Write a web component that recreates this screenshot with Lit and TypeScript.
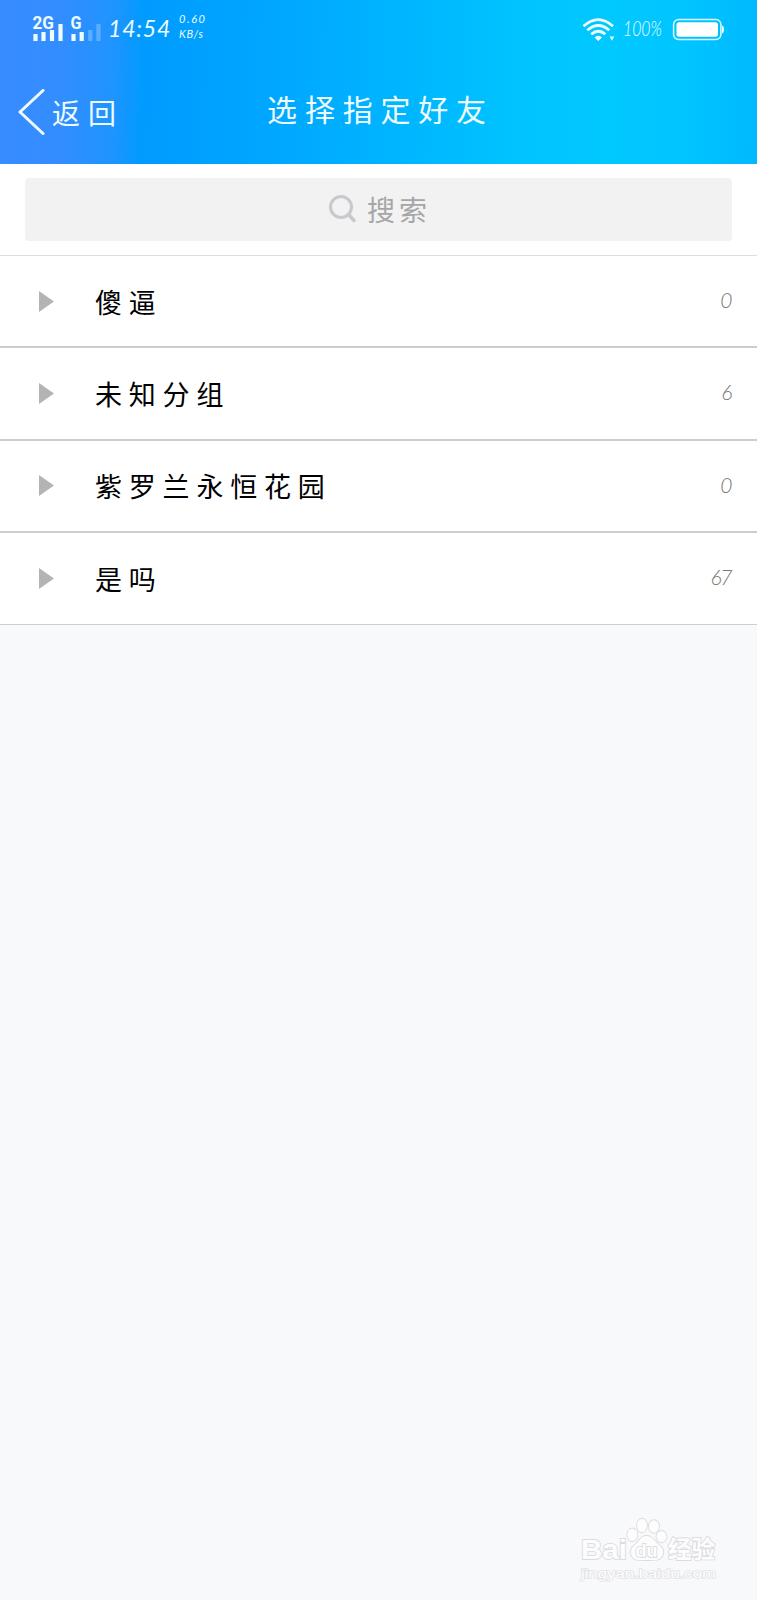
import { LitElement, html, css } from "lit";
import { customElement, property } from "lit/decorators.js";

interface Group {
  name: string;
  count: number;
}

const GROUPS: Group[] = [
  { name: "傻逼", count: 0 },
  { name: "未知分组", count: 6 },
  { name: "紫罗兰永恒花园", count: 0 },
  { name: "是吗", count: 67 },
];

@customElement("status-bar")
class StatusBar extends LitElement {
  static styles = css`
    :host { display: flex; height: 56px; padding: 0 33px 0 32px; color: #effcff; }
    .left, .right { display: flex; align-items: flex-start; }
    .right { margin-left: auto; }
    svg { display: block; flex: none; }
    .net { font: 700 17.5px "Roboto", sans-serif; fill: #effcff; }
    .time {
      width: 63px; margin: 12px 0 0 7px;
      font: italic 400 23px/32px "Lato", sans-serif; letter-spacing: 0.8px; white-space: nowrap;
    }
    .speed { margin: 11px 0 0 8px; font: italic 400 11px/15px "Lato", sans-serif; white-space: nowrap; }
    .speed div:first-child { letter-spacing: 1.6px; }
    .speed div:last-child { letter-spacing: 0.6px; }
    .wifi { margin: 17px 0 0 0; }
    .pct { width: 42px; margin: 14px 0 0 8px; font: italic 300 21px/28px "Lato", sans-serif; white-space: nowrap; }
    .pct span { display: inline-block; transform: scaleX(0.75); transform-origin: 0 50%; }
    .battery { margin: 18px 0 0 7px; }
  `;
  render() {
    return html`
      <div class="left">
        <svg width="69" height="44" viewBox="32 0 69 44">
          <text class="net" x="32.5" y="28.5" textLength="21.5" lengthAdjust="spacingAndGlyphs">2G</text>
          <text class="net" x="70.5" y="28.5" textLength="11" lengthAdjust="spacingAndGlyphs">G</text>
          <g stroke="#effcff" stroke-width="4.2" stroke-linecap="butt">
            <path d="M35.500 34v7M43.500 32v9M52 30v11M60.500 24v17M73.500 34v7M81.700 32v9" />
            <path d="M90.300 30v11M98.500 24v17" opacity="0.27" />
          </g>
        </svg>
        <div class="time">14:54</div>
        <div class="speed"><div>0.60</div><div>KB/s</div></div>
      </div>
      <div class="right">
        <svg class="wifi" width="33" height="25" viewBox="582 17 33 25">
          <g fill="none" stroke="#effcff" stroke-width="2.8">
            <path d="M583.500 26.200Q598.300 13 613 26.200" />
            <path d="M587.300 30.300Q598.300 20.800 609.300 30.300" />
            <path d="M591.200 34.300Q598.300 28.300 605.400 34.300" />
          </g>
          <path d="M594.500 37.500Q598.300 34 602 37.500L598.300 41Z M609.600 36.500h4.600l-2.300 4.300Z" fill="#effcff" />
        </svg>
        <div class="pct"><span>100%</span></div>
        <svg class="battery" width="52" height="23" viewBox="672 18 52 23">
          <rect x="673.600" y="19.600" width="47.300" height="19.800" rx="5" fill="none" stroke="#dcfaff" stroke-width="1.500" />
          <rect x="676.500" y="22.300" width="41.500" height="14.400" rx="2.500" fill="#fff" />
          <path d="M722 25.500q2 .5 2 4t-2 4Z" fill="#effcff" />
        </svg>
      </div>
    `;
  }
}

@customElement("group-row")
class GroupRow extends LitElement {
  @property() name = "";
  @property({ type: Number }) count = 0;
  static styles = css`
    :host {
      display: flex; align-items: center; box-sizing: border-box; height: 92.25px;
      padding: 0 26px 0 39px; background: #fff; border-bottom: 2px solid #cdcdcf;
    }
    .arrow { display: block; width: 15px; height: 21px; }
    .name {
      margin: 1px 0 0 41px; font: 400 27px/40px "Noto Sans CJK SC", sans-serif;
      letter-spacing: 6.8px; color: #000;
    }
    .count { margin: -2px 0 0 auto; font: italic 300 21px/30px "Lato", sans-serif; color: #777; letter-spacing: -1.5px; }
  `;
  render() {
    return html`
      <svg class="arrow" viewBox="0 0 15 21"><path d="M0 0L15 10.500L0 21Z" fill="#b4b4b4" /></svg>
      <span class="name">${this.name}</span>
      <span class="count">${this.count}</span>
    `;
  }
}

@customElement("baidu-mark")
class BaiduMark extends LitElement {
  static styles = css`
    :host { display: block; }
    svg { display: block; }
    .word { font: 700 28px "Liberation Sans", sans-serif; }
    .du { font: 700 18px "Liberation Sans", sans-serif; }
    .cn { font: 700 24px "Noto Sans CJK SC", sans-serif; }
    .url { font: 400 13.5px "Liberation Sans", sans-serif; stroke: #e4e4e7; stroke-width: 1.6px; }
    .outline { fill: #fdfdfe; stroke: #dcdcde; stroke-width: 1.8px; paint-order: stroke; }
  `;
  render() {
    return html`
      <svg width="140" height="70" viewBox="578 1515 140 70">
        <g class="outline">
          <text class="word" x="581" y="1559" textLength="46" lengthAdjust="spacingAndGlyphs">Bai</text>
          <ellipse cx="632.300" cy="1534.800" rx="5" ry="6.300" />
          <ellipse cx="642" cy="1525.500" rx="5" ry="6.800" />
          <ellipse cx="654" cy="1526.500" rx="5" ry="6.300" />
          <ellipse cx="661.500" cy="1536.500" rx="5" ry="5.500" />
          <path d="M646.500 1536c-6 0-7 5-11 8.500-4 3-6 7-4 11 3 6 9 4.500 15 4.500s13 1.500 16-4.500c2-4 0-8-4-11-4-3.500-6-8.500-12-8.500Z" />
          <text class="du" x="635.500" y="1557" textLength="22" lengthAdjust="spacingAndGlyphs">du</text>
          <text class="cn" x="668" y="1558" textLength="47" lengthAdjust="spacingAndGlyphs">经验</text>
          <text class="url" x="581" y="1578" textLength="135" lengthAdjust="spacingAndGlyphs">jingyan.baidu.com</text>
        </g>
      </svg>
    `;
  }
}

@customElement("app-root")
class AppRoot extends LitElement {
  static styles = css`
    :host {
      display: flex; flex-direction: column; width: 757px; height: 1600px;
      overflow: hidden; background: #f8f9fb; font-family: "Noto Sans CJK SC", sans-serif;
    }
    .header {
      flex: none; height: 164px;
      background: linear-gradient(91deg, #388cff 0%, #338dff 8%, #1f94ff 15%, #009bff 19%, #00a6ff 35%, #00b6ff 54%, #00c3ff 68%, #00c9ff 80%, #00c5ff 90%, #00b9ff 100%);
    }
    .nav {
      display: grid; grid-template-columns: 1fr auto 1fr; align-items: center;
      height: 108px; box-sizing: border-box; padding: 3px 18px 0; color: #effcff;
    }
    .back { display: flex; align-items: center; gap: 7px; font-size: 28px; line-height: 40px; letter-spacing: 8px; }
    .back svg { display: block; }
    .title { font-size: 30px; line-height: 44px; letter-spacing: 7.8px; padding-left: 4px; margin-top: -7px; }
    .search { flex: none; box-sizing: border-box; height: 92px; padding: 14px 25px; background: #fff; border-bottom: 1px solid #dedee0; }
    .field {
      display: flex; align-items: center; justify-content: center; gap: 10px; height: 63px; border-radius: 4px;
      box-sizing: border-box; padding: 0 0 2px 3px;
      background: #f2f2f2; color: #a6a6a6; font-size: 28px; line-height: 40px; letter-spacing: 4px;
    }
    .field svg { display: block; }
    .list { flex: none; }
    .list group-row:last-child { border-bottom-width: 1px; }
    .foot { display: flex; justify-content: flex-end; margin-top: auto; padding: 0 39px 15px 0; }
  `;
  render() {
    return html`
      <div class="header">
        <status-bar></status-bar>
        <div class="nav">
          <div class="back">
            <svg width="27" height="46" viewBox="0 0 27 46">
              <path d="M25 1.500L2 23L25 44.500" fill="none" stroke="#effcff" stroke-width="3" stroke-linecap="round" stroke-linejoin="round" />
            </svg>
            <span>返回</span>
          </div>
          <div class="title">选择指定好友</div>
          <div></div>
        </div>
      </div>
      <div class="search">
        <div class="field">
          <svg width="28" height="28" viewBox="0 0 28 28">
            <circle cx="12" cy="12" r="10.500" fill="none" stroke="#c8c8ce" stroke-width="3" />
            <path d="M19.500 19.500L25 25.500" stroke="#c8c8ce" stroke-width="3.600" stroke-linecap="round" />
          </svg>
          <span>搜索</span>
        </div>
      </div>
      <div class="list">
        ${GROUPS.map((g) => html`<group-row .name=${g.name} .count=${g.count}></group-row>`)}
      </div>
      <div class="foot"><baidu-mark></baidu-mark></div>
    `;
  }
}
